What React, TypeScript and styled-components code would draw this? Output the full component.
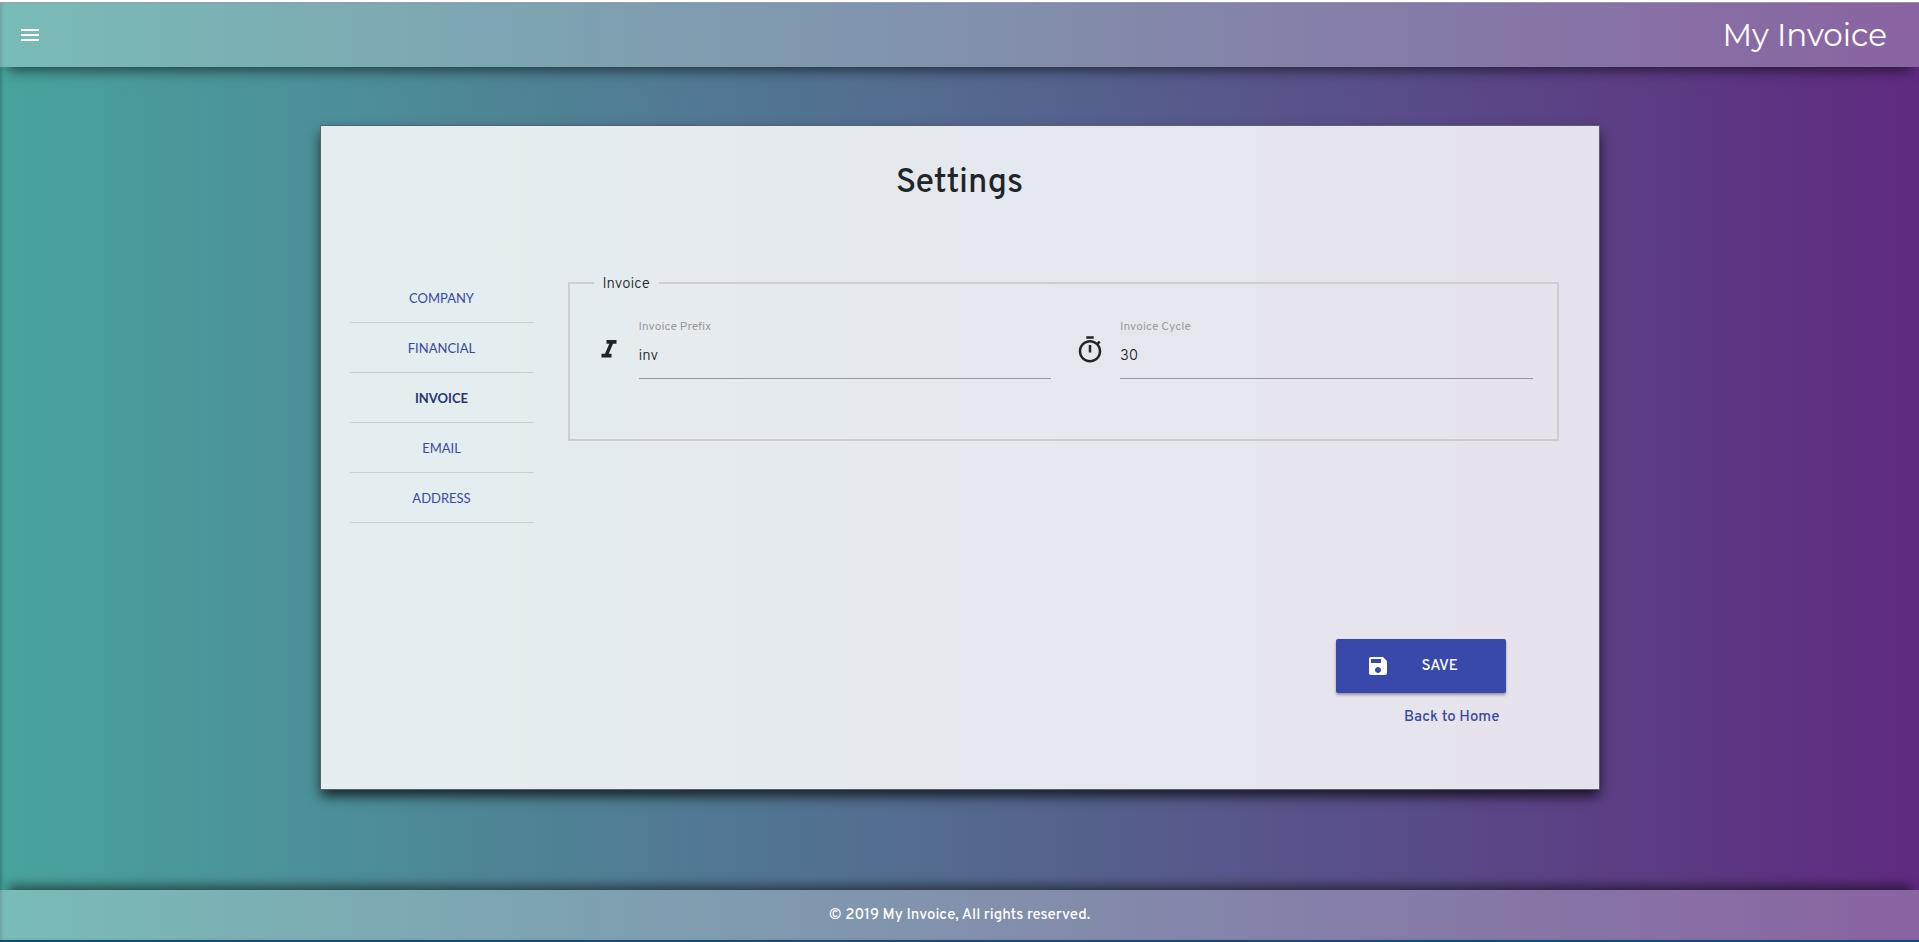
import React, { useState } from "react";
import styled, { createGlobalStyle } from "styled-components";

const GlobalStyle = createGlobalStyle`
  *, *::before, *::after { box-sizing: border-box; }
  body {
    margin: 0;
    background: #fff;
    color: #212529;
    font-family: "Overpass", Roboto, "Open Sans", sans-serif;
    font-size: 15px;
  }
`;

const Page = styled.div`
  display: flex;
  flex-direction: column;
  min-height: 100vh;
  border-top: 2px solid #fff;
  border-bottom: 2px solid #124a7c;
  background: linear-gradient(to right, #48a39d, #54698f 50%, #5f2a80);
  box-shadow: inset 2px 0 3px rgba(0, 0, 0, 0.2);
`;

const Header = styled.header`
  display: flex;
  align-items: center;
  justify-content: space-between;
  height: 65px;
  padding: 0 32px 0 18px;
  border-top: 1px solid rgba(160, 160, 170, 0.8);
  background: rgba(255, 255, 255, 0.27);
  box-shadow: 0 12px 12px -8px rgba(0, 0, 0, 0.55);
`;

const MenuButton = styled.button`
  display: flex;
  padding: 0;
  border: 0;
  background: none;
  color: #fff;
  cursor: pointer;
`;

const Brand = styled.span`
  color: #fff;
  font-family: "Montserrat", Inter, sans-serif;
  font-size: 31px;
  line-height: 40px;
`;

const Main = styled.main`
  display: flex;
  flex: 1;
  justify-content: center;
  padding: 58px 16px 100px;
`;

const Card = styled.section`
  display: flex;
  flex-direction: column;
  width: 68%;
  max-width: 1280px;
  padding: 34px 40px 59px 29px;
  border: 1px solid #5b6266;
  background: rgba(255, 255, 255, 0.85);
  background-clip: padding-box;
  box-shadow: 0 7px 12px -1px rgba(0, 0, 0, 0.75);
`;

const Title = styled.h1`
  margin: 0 0 65px;
  padding-left: 11px;
  font-size: 34px;
  font-weight: 500;
  line-height: 48px;
  text-align: center;
`;

const Columns = styled.div`
  display: flex;
  align-items: flex-start;
  gap: 34px;
`;

const Nav = styled.nav`
  display: flex;
  flex: 0 0 184px;
  flex-direction: column;
`;

const NavLink = styled.a<{ $active?: boolean }>`
  height: 50px;
  border-bottom: 1px solid #c9ced2;
  color: ${(p) => (p.$active ? "#283573" : "#3949a0")};
  font-family: Lato, sans-serif;
  font-size: 13px;
  font-weight: ${(p) => (p.$active ? 700 : 400)};
  line-height: 50px;
  text-align: center;
  text-decoration: none;
  text-transform: uppercase;
`;

const Fieldset = styled.fieldset`
  display: grid;
  flex: 1;
  grid-template-columns: 1fr 1fr;
  gap: 24px;
  min-width: 0;
  margin: 0;
  padding: 27px 24px 60px;
  border: 2px solid #cdced2;
`;

const Legend = styled.legend`
  padding: 4px 9px 0;
  font-weight: 300;
  line-height: 16px;
`;

const FieldRow = styled.div`
  display: flex;
  align-items: center;
  gap: 15px;
`;

const Field = styled.div`
  display: flex;
  flex: 1;
  flex-direction: column;
  min-width: 0;
`;

const Label = styled.label`
  color: #9a9ca0;
  font-size: 12px;
  line-height: 14px;
`;

const Input = styled.input`
  width: 100%;
  height: 45px;
  padding: 0;
  border: 0;
  border-bottom: 1px solid #94969e;
  outline: 0;
  background: none;
  color: #212529;
  font: inherit;
  font-weight: 300;
`;

const Actions = styled.div`
  display: flex;
  flex-direction: column;
  align-items: flex-end;
  gap: 13px;
  margin-top: auto;
  padding-right: 53px;
`;

const SaveButton = styled.button`
  display: flex;
  align-items: center;
  width: 170px;
  height: 54px;
  padding: 0 30px;
  gap: 32px;
  border: 0;
  border-radius: 2px;
  background: #3949ab;
  box-shadow: 0 2px 3px rgba(0, 0, 0, 0.35);
  color: #fff;
  font: inherit;
  font-weight: 500;
  cursor: pointer;
`;

const HomeLink = styled.a`
  padding: 0 6px;
  color: #3949a0;
  font-weight: 500;
  line-height: 24px;
  text-decoration: none;
`;

const Footer = styled.footer`
  display: flex;
  align-items: center;
  justify-content: center;
  height: 50px;
  background: rgba(255, 255, 255, 0.27);
  box-shadow: 0 -12px 12px -8px rgba(0, 0, 0, 0.55);
  color: #fff;
  font-weight: 500;
`;

function Icon({ d, size }: { d: string; size: number }) {
  return (
    <svg width={size} height={size} viewBox="0 0 24 24" fill="currentColor" aria-hidden="true">
      <path d={d} />
    </svg>
  );
}

const icons = {
  menu: "M3 18h18v-2H3v2zm0-5h18v-2H3v2zm0-7v2h18V6H3z",
  italic: "M10 4v3h2.21l-3.42 8H6v3h8v-3h-2.21l3.42-8H18V4z",
  timer:
    "M15 1H9v2h6V1zm-4 13h2V8h-2v6zm8.03-6.61l1.42-1.42c-.43-.51-.9-.99-1.41-1.41l-1.42 1.42C16.07 4.74 14.12 4 12 4c-4.97 0-9 4.03-9 9s4.02 9 9 9 9-4.03 9-9c0-2.12-.74-4.07-1.97-5.61zM12 20c-3.87 0-7-3.13-7-7s3.13-7 7-7 7 3.13 7 7-3.13 7-7 7z",
  save: "M17 3H5c-1.11 0-2 .9-2 2v14c0 1.1.89 2 2 2h14c1.1 0 2-.9 2-2V7l-4-4zm-5 16c-1.66 0-3-1.34-3-3s1.34-3 3-3 3 1.34 3 3-1.34 3-3 3zm3-10H5V5h10v4z",
};

const sections = ["Company", "Financial", "Invoice", "Email", "Address"];

export default function App() {
  const [prefix, setPrefix] = useState("inv");
  const [cycle, setCycle] = useState("30");

  return (
    <>
      <GlobalStyle />
      <Page>
        <Header>
          <MenuButton type="button" aria-label="Menu">
            <Icon d={icons.menu} size={24} />
          </MenuButton>
          <Brand>My Invoice</Brand>
        </Header>
        <Main>
          <Card>
            <Title>Settings</Title>
            <Columns>
              <Nav>
                {sections.map((name) => (
                  <NavLink key={name} href={`#${name.toLowerCase()}`} $active={name === "Invoice"}>
                    {name}
                  </NavLink>
                ))}
              </Nav>
              <Fieldset>
                <Legend>Invoice</Legend>
                <FieldRow>
                  <Icon d={icons.italic} size={30} />
                  <Field>
                    <Label htmlFor="prefix">Invoice Prefix</Label>
                    <Input id="prefix" value={prefix} onChange={(e) => setPrefix(e.target.value)} />
                  </Field>
                </FieldRow>
                <FieldRow>
                  <Icon d={icons.timer} size={30} />
                  <Field>
                    <Label htmlFor="cycle">Invoice Cycle</Label>
                    <Input id="cycle" value={cycle} onChange={(e) => setCycle(e.target.value)} />
                  </Field>
                </FieldRow>
              </Fieldset>
            </Columns>
            <Actions>
              <SaveButton type="button">
                <Icon d={icons.save} size={24} />
                SAVE
              </SaveButton>
              <HomeLink href="#home">Back to Home</HomeLink>
            </Actions>
          </Card>
        </Main>
        <Footer>© 2019 My Invoice, All rights reserved.</Footer>
      </Page>
    </>
  );
}
